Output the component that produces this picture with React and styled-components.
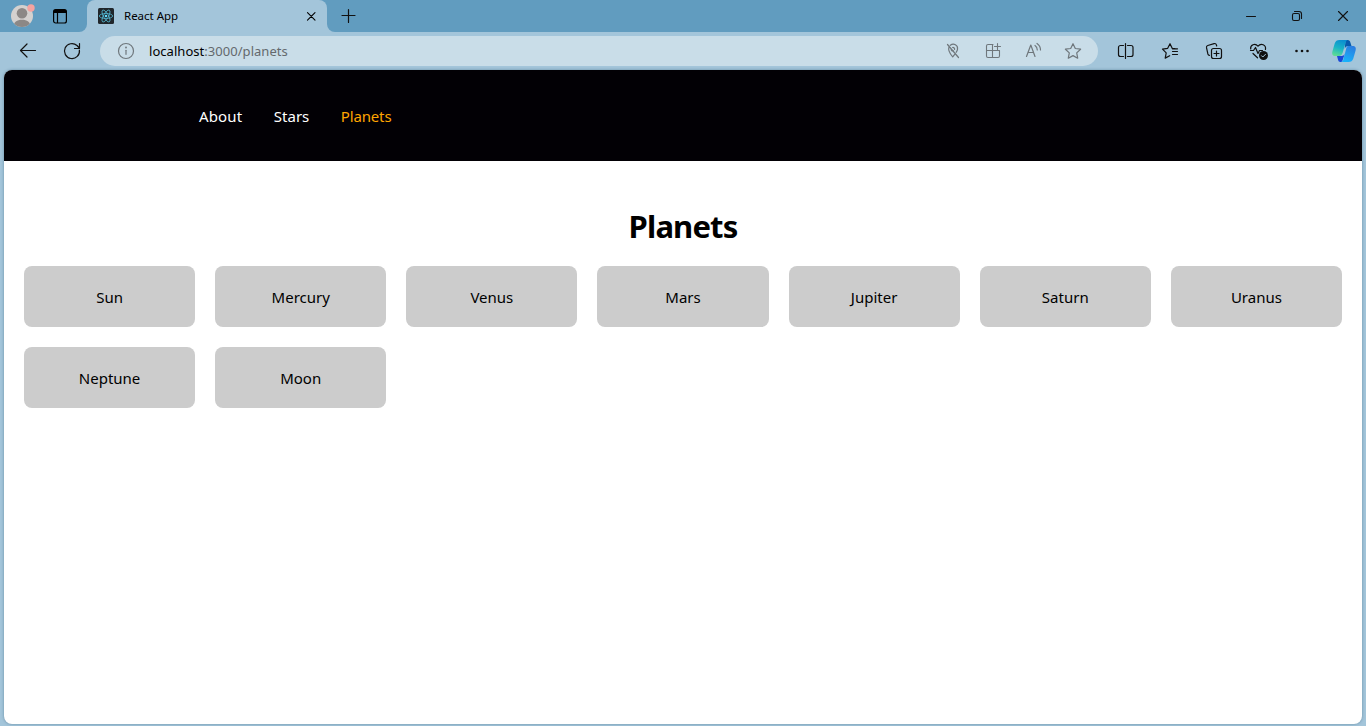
import React from "react";
import styled, { createGlobalStyle } from "styled-components";

const GlobalStyle = createGlobalStyle`
  * { box-sizing: border-box; }
  html, body { margin: 0; padding: 0; }
  body {
    font-family: "Noto Sans", "Open Sans", sans-serif;
    background: #a3c5da;
    overflow: hidden;
  }
`;

const Window = styled.div`
  display: flex;
  flex-direction: column;
  width: 1366px;
  height: 726px;
  background: #a3c5da;
`;

const TitleBar = styled.div`
  display: flex;
  height: 32px;
`;

const TitleStart = styled.div`
  display: flex;
  align-items: flex-start;
  gap: 15px;
  width: 87px;
  padding: 4px 0 0 10px;
  background: #619cbf;
  border-bottom-right-radius: 8px;
`;

const TabWell = styled.div`
  width: 240px;
  background: linear-gradient(#619cbf 50%, #a3c5da 50%);
`;

const Tab = styled.div`
  display: flex;
  align-items: center;
  height: 32px;
  padding: 0 8px 0 11px;
  background: #a3c5da;
  border-radius: 8px 8px 0 0;
`;

const TabTitle = styled.span`
  flex: 1;
  margin-left: 10px;
  font-size: 11.5px;
  line-height: 16px;
  letter-spacing: -0.02px;
  color: #000;
`;

const TitleEnd = styled.div`
  display: flex;
  flex: 1;
  justify-content: space-between;
  background: #619cbf;
  border-bottom-left-radius: 8px;
`;

const Slot = styled.div`
  display: flex;
  flex: none;
  align-items: center;
  justify-content: center;
  width: ${(p) => p.$width || 44}px;
  height: ${(p) => p.$height || 38}px;
  color: ${(p) => p.$color || "#111"};
`;

const WindowButtons = styled.div`
  display: flex;
`;

const Toolbar = styled.div`
  display: flex;
  align-items: center;
  height: 38px;
  padding: 0 2px 0 6px;
`;

const AddressBar = styled.div`
  display: flex;
  align-items: center;
  width: 998px;
  height: 30px;
  margin: 0 6px;
  padding: 0 5px 0 14px;
  background: #c9dde8;
  border-radius: 15px;
`;

const Url = styled.span`
  flex: 1;
  margin-left: 11px;
  font-size: 13px;
  line-height: 20px;
  letter-spacing: 0.04px;
  color: #64696d;
`;

const Host = styled.span`
  color: #000;
`;

const Icon = styled.svg`
  display: block;
  flex: none;
  fill: none;
  stroke: currentColor;
  stroke-width: ${(p) => p.$stroke || 1.2};
  stroke-linecap: round;
  stroke-linejoin: round;
`;

const Page = styled.div`
  display: flex;
  flex-direction: column;
  height: 654px;
  margin: 0 4px;
  overflow: hidden;
  background: #fff;
  border-radius: 8px;
  box-shadow: 0 0 3px rgba(30, 70, 100, 0.45);
`;

const SiteHeader = styled.header`
  display: flex;
  align-items: center;
  height: 91px;
  padding: 1px 0 0 195px;
  background: #020005;
`;

const NavLink = styled.a`
  margin-right: 31.5px;
  font-size: 15px;
  line-height: 22px;
  letter-spacing: ${(p) => p.$tracking}px;
  color: ${(p) => (p.$active ? "#ffa500" : "#fff")};
`;

const Content = styled.main`
  padding: 43px 20px 0;
`;

const Heading = styled.h1`
  margin: 0 0 18px;
  font-size: 31px;
  font-weight: 700;
  line-height: 44px;
  letter-spacing: -0.85px;
  text-align: center;
  color: #000;
`;

const PlanetGrid = styled.div`
  display: grid;
  grid-template-columns: repeat(7, 1fr);
  gap: 20px;
`;

const PlanetCard = styled.div`
  display: flex;
  align-items: center;
  justify-content: center;
  height: 61px;
  padding-top: 1px;
  font-size: 15px;
  line-height: 22px;
  letter-spacing: 0;
  color: #000;
  background: #ccc;
  border-radius: 8px;
`;

const planets = ["Sun", "Mercury", "Venus", "Mars", "Jupiter", "Saturn", "Uranus", "Neptune", "Moon"];

function Glyph({ children, stroke }) {
  return (
    <Icon width="24" height="24" viewBox="0 0 24 24" $stroke={stroke}>
      {children}
    </Icon>
  );
}

function Avatar() {
  return (
    <svg width="26" height="24" viewBox="0 0 26 24">
      <defs>
        <clipPath id="face"><circle cx="12" cy="12" r="11" /></clipPath>
      </defs>
      <circle cx="12" cy="12" r="11" fill="#d4d1cf" />
      <g clipPath="url(#face)" fill="#8c8886">
        <circle cx="12" cy="9.3" r="5.3" />
        <path d="M3.500 23c0-5 3.500-7.200 8.500-7.200s8.500 2.200 8.500 7.200z" />
      </g>
      <circle cx="21" cy="4" r="3.700" fill="#f5a3a0" />
    </svg>
  );
}

function ReactMark() {
  return (
    <svg width="16" height="16" viewBox="0 0 16 16">
      <rect width="16" height="16" rx="1.500" fill="#20262b" />
      <g fill="none" stroke="#52b5cf" strokeWidth="0.8">
        <ellipse cx="8" cy="8" rx="6.700" ry="2.500" />
        <ellipse cx="8" cy="8" rx="6.700" ry="2.500" transform="rotate(60 8 8)" />
        <ellipse cx="8" cy="8" rx="6.700" ry="2.500" transform="rotate(120 8 8)" />
      </g>
      <circle cx="8" cy="8" r="1.300" fill="#61dafb" />
    </svg>
  );
}

function Copilot() {
  return (
    <svg width="26" height="24" viewBox="0 0 26 24">
      <defs>
        <linearGradient id="leftRibbon" x1="0.6" y1="0" x2="0.3" y2="1">
          <stop offset="0" stopColor="#0b8fd0" />
          <stop offset="0.5" stopColor="#19b3c6" />
          <stop offset="1" stopColor="#5fdc93" />
        </linearGradient>
        <linearGradient id="rightRibbon" x1="0.7" y1="0" x2="0.3" y2="1">
          <stop offset="0" stopColor="#2b7de0" />
          <stop offset="1" stopColor="#18b4fb" />
        </linearGradient>
      </defs>
      <path d="M14.500 1h2.200c1.600 0 2.300 1 2.700 2.500l1.100 3.500h-3c-2.200 0-3.200 1-3.800 3z" fill="#075bad" />
      <path d="M6 17h4.500c2 0 3-1 3.600-3l-2.600 7.500c-.4 1.100-1 1.500-2 1.500H9.300c-1.200 0-1.900-.8-2.200-2z" fill="#1948d8" />
      <path d="M8.500 1h8.200c-1.200.3-1.700 1.300-2.100 2.700L12.300 11.500C11.500 14.500 10.400 17 8.400 17H4.500C1.500 17 .7 15 1.400 12.500l2.300-8C4.500 2 6 1 8.500 1z" fill="url(#leftRibbon)" />
      <path d="M17.500 7h4c3 0 3.800 2 3.100 4.500l-2.300 8c-.8 2.500-2.300 3.500-4.800 3.500H10.300c1.200-.3 1.700-1.300 2.100-2.700L15.200 9.500C15.700 7.800 16 7 17.500 7z" fill="url(#rightRibbon)" />
    </svg>
  );
}

function BrowserTitleBar() {
  return (
    <TitleBar>
      <TitleStart>
        <Avatar />
        <Icon width="18" height="24" viewBox="0 0 18 24">
          <path d="M2.600 7.500h12.800v9.500a2 2 0 0 1-2 2H4.600a2 2 0 0 1-2-2z M6.500 9v10" />
          <path d="M2 9V7.500a2.500 2.500 0 0 1 2.500-2.500h9A2.500 2.500 0 0 1 16 7.500V9z" fill="currentColor" stroke="none" />
        </Icon>
      </TitleStart>
      <TabWell>
        <Tab>
          <ReactMark />
          <TabTitle>React App</TabTitle>
          <Icon width="16" height="16" viewBox="0 0 16 16" $stroke={1.1}>
            <path d="M4.500 4.700l7.500 7.500M12 4.700L4.500 12.200" />
          </Icon>
        </Tab>
      </TabWell>
      <TitleEnd>
        <Slot $height={32}>
          <Glyph stroke={1.2}><path d="M11.500 5.500v13M5 11.500h13" /></Glyph>
        </Slot>
        <WindowButtons>
          <Slot $width={46} $height={32}>
            <Glyph stroke={1}><path d="M7.500 12.500h9" /></Glyph>
          </Slot>
          <Slot $width={46} $height={32}>
            <Glyph stroke={1.1}>
              <rect x="7.500" y="9.500" width="7" height="7" rx="1.500" />
              <path d="M9.500 7.500H14a2.500 2.500 0 0 1 2.500 2.500v4.500" />
            </Glyph>
          </Slot>
          <Slot $width={46} $height={32}>
            <Glyph stroke={1.1}><path d="M7.500 7.500l9 9M16.500 7.500l-9 9" /></Glyph>
          </Slot>
        </WindowButtons>
      </TitleEnd>
    </TitleBar>
  );
}

function BrowserToolbar() {
  return (
    <Toolbar>
      <Slot><Glyph><path d="M19.500 11.500H4.500M11 5l-6.500 6.500L11 18" /></Glyph></Slot>
      <Slot><Glyph><path d="M19.400 11a7.500 7.500 0 1 1-2.400-4.500l2.300 2.500M19.500 4.500V9.500H14.500" /></Glyph></Slot>
      <AddressBar>
        <Slot $width={24} $height={24} $color="#6f777c">
          <Glyph><circle cx="12" cy="12" r="7.500" /><path d="M12 11.300v4" /><circle cx="12" cy="8.500" r=".4" /></Glyph>
        </Slot>
        <Url><Host>localhost</Host>:3000/planets</Url>
        <Slot $width={40} $height={30} $color="#6f777c">
          <Glyph stroke={1.2}>
            <path d="M6.500 5.500l11 13M8 8c-1.300 3.200.6 6.300 3.700 9.800l2-2.500M9.300 6.300c3.300-2.600 7.900-.3 7.200 4-.2 1-.7 2-1.300 3M13.600 10.500a1.700 1.700 0 0 0-2-2M10.300 9.700a1.700 1.700 0 0 0 2.300 2.200" />
          </Glyph>
        </Slot>
        <Slot $width={40} $height={30} $color="#6f777c">
          <Glyph stroke={1.1}>
            <path d="M12 5.500H7A1.500 1.500 0 0 0 5.500 7v10A1.500 1.500 0 0 0 7 18.500h10a1.500 1.500 0 0 0 1.500-1.500v-5.500h-13M11.500 5.500v13M16.500 4.500v6M13.500 7.500h6" />
          </Glyph>
        </Slot>
        <Slot $width={40} $height={30} $color="#6f777c">
          <Glyph stroke={1.2}>
            <path d="M5.500 17.500l4.300-11.500L14 17.500M7 13.500h5.600M14 6.500c1.500 1 2.300 2.500 2.300 4.500M16 4.500c2.200 1.500 3.500 3.700 3.500 6.500" />
          </Glyph>
        </Slot>
        <Slot $width={40} $height={30} $color="#6f777c">
          <Glyph stroke={1.2}>
            <path d="M12 4.700l2.300 4.800 5.300.7-3.900 3.700 1 5.300L12 16.600l-4.700 2.600 1-5.300-3.900-3.700 5.300-.7z" />
          </Glyph>
        </Slot>
      </AddressBar>
      <Slot>
        <Glyph><path d="M9.500 6.500H6.500a2 2 0 0 0-2 2v7a2 2 0 0 0 2 2h3M11.500 4.500v15M13.500 6.500h3.500a2 2 0 0 1 2 2v7a2 2 0 0 1-2 2h-3.500" /></Glyph>
      </Slot>
      <Slot>
        <Glyph>
          <path d="M17 9.500h-2.700L12 4.700 9.700 9.300l-5.200.9 3.700 3.700-1 5.200 4.500-2.400M14.500 9.800h5M14.500 12.500h5M14.500 15.500h5" />
        </Glyph>
      </Slot>
      <Slot>
        <Glyph>
          <rect x="9.500" y="9.500" width="10" height="10" rx="2" />
          <path d="M14.500 12v5M12 14.500h5M7.500 16.300c-.9 0-1.400-.5-1.600-1.300L4.500 8.700c-.2-1.100.3-1.900 1.300-2.200l6.300-1.900c1.100-.3 2 .2 2.300 1.200l.3 1.200" />
        </Glyph>
      </Slot>
      <Slot>
        <Glyph>
          <path d="M4.700 10C4 6 9 3.500 12 7.200 15 3.500 20.500 6 19.400 10.500M4.500 11.500h3l2-3 2.500 6 1.500-3h3M7 14.500l4.500 4.300" />
          <circle cx="17.500" cy="16.500" r="4.500" fill="currentColor" stroke="none" />
          <path d="M15.500 16.700l1.300 1.300 2.700-2.700" stroke="#a3c5da" strokeWidth="1" />
        </Glyph>
      </Slot>
      <Slot>
        <Glyph>
          <g fill="currentColor" stroke="none">
            <circle cx="6.500" cy="12" r="1.300" /><circle cx="12" cy="12" r="1.300" /><circle cx="17.500" cy="12" r="1.300" />
          </g>
        </Glyph>
      </Slot>
      <Slot $width={40}><Copilot /></Slot>
    </Toolbar>
  );
}

export default function App() {
  return (
    <Window>
      <GlobalStyle />
      <BrowserTitleBar />
      <BrowserToolbar />
      <Page>
        <SiteHeader>
          <NavLink $tracking={0.15}>About</NavLink>
          <NavLink $tracking={0}>Stars</NavLink>
          <NavLink $tracking={-0.15} $active>Planets</NavLink>
        </SiteHeader>
        <Content>
          <Heading>Planets</Heading>
          <PlanetGrid>
            {planets.map((name) => <PlanetCard key={name}>{name}</PlanetCard>)}
          </PlanetGrid>
        </Content>
      </Page>
    </Window>
  );
}
